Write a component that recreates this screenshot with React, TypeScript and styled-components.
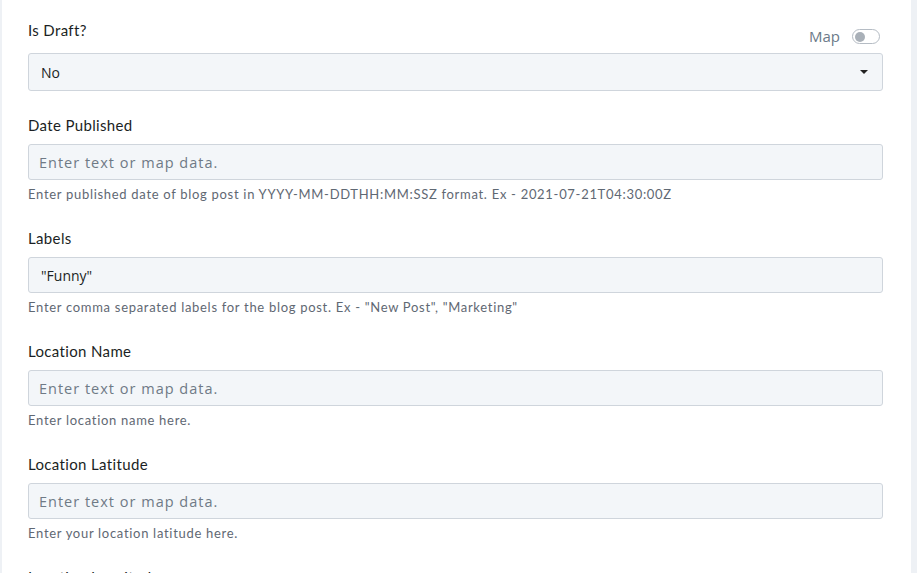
import React from "react";
import styled, { createGlobalStyle } from "styled-components";

const GlobalStyle = createGlobalStyle`
	html, body {
		margin: 0;
		padding: 0;
		background: #eef1f5;
		overflow: hidden;
	}
	* {
		box-sizing: border-box;
	}
`;

const Page = styled.div`
	display: flex;
	width: 917px;
	height: 573px;
	padding-left: 2px;
	padding-right: 6px;
	background: #eef1f5;
`;

const Panel = styled.div`
	flex: 1;
	background: #fff;
	padding: 20px 28px 0 26px;
	display: flex;
	flex-direction: column;
	gap: 24px;
	overflow: hidden;
`;

const Group = styled.div`
	display: flex;
	flex-direction: column;
`;

const HeaderRow = styled.div`
	display: flex;
	justify-content: space-between;
	align-items: flex-start;
	height: 33px;
`;

const Label = styled.label<{ $flush?: boolean }>`
	font-family: Lato, "Liberation Sans", sans-serif;
	font-size: 15px;
	line-height: 20px;
	letter-spacing: 0.35px;
	color: #1b1f24;
	margin-bottom: ${(p) => (p.$flush ? "0" : "9px")};
`;

const MapSwitch = styled.div`
	display: flex;
	align-items: center;
	gap: 12px;
	padding-top: 7px;
	padding-right: 3px;
	font-family: "Open Sans", "Liberation Sans", sans-serif;
	font-size: 15px;
	line-height: 18px;
	color: #6c7a89;
`;

const Toggle = styled.span<{ $on?: boolean }>`
	position: relative;
	width: 28px;
	height: 15px;
	border-radius: 8px;
	border: 1px solid #b5bcc4;
	background: #fff;

	&::after {
		content: "";
		position: absolute;
		top: 2px;
		left: ${(p) => (p.$on ? "15px" : "2px")};
		width: 10px;
		height: 10px;
		border-radius: 50%;
		background: #a9b0b8;
	}
`;

const Field = styled.div<{ $tall?: boolean }>`
	display: flex;
	align-items: center;
	justify-content: space-between;
	height: ${(p) => (p.$tall ? "38px" : "36px")};
	padding: 0 14px 0 10px;
	background: #f3f6f9;
	border: 1px solid #cfd5dc;
	border-radius: 3px;
	font-family: "Open Sans", "Liberation Sans", sans-serif;
	font-size: 14px;
	color: #1b1f24;
`;

const Value = styled.span<{ $placeholder?: boolean }>`
	color: ${(p) => (p.$placeholder ? "#6f7a86" : "#1b1f24")};
	font-size: ${(p) => (p.$placeholder ? "14.5px" : "14px")};
	letter-spacing: ${(p) => (p.$placeholder ? "1px" : "0")};
	padding-left: ${(p) => (p.$placeholder ? "0" : "2px")};
`;

const Caret = styled.span`
	width: 0;
	height: 0;
	border-left: 4px solid transparent;
	border-right: 4px solid transparent;
	border-top: 4px solid #222;
`;

const Help = styled.div`
	margin-top: 4px;
	font-family: Lato, "Liberation Sans", sans-serif;
	font-size: 13px;
	line-height: 20px;
	letter-spacing: 0.7px;
	color: #5f6873;
`;

type Input = { label: string; value?: string; help?: string };

const inputs: Input[] = [
	{
		label: "Date Published",
		help: "Enter published date of blog post in YYYY-MM-DDTHH:MM:SSZ format. Ex - 2021-07-21T04:30:00Z",
	},
	{
		label: "Labels",
		value: '"Funny"',
		help: 'Enter comma separated labels for the blog post. Ex - "New Post", "Marketing"',
	},
	{ label: "Location Name", help: "Enter location name here." },
	{ label: "Location Latitude", help: "Enter your location latitude here." },
	{ label: "Location Longitude", help: "Enter your location longitude here." },
];

export default function App() {
	return (
		<Page>
			<GlobalStyle />
			<Panel>
				<Group>
					<HeaderRow>
						<Label as="div" $flush>Is Draft?</Label>
						<MapSwitch>
							Map
							<Toggle />
						</MapSwitch>
					</HeaderRow>
					<Field $tall>
						<Value>No</Value>
						<Caret />
					</Field>
				</Group>
				{inputs.map((input) => (
					<Group key={input.label}>
						<Label>{input.label}</Label>
						<Field>
							{input.value ? (
								<Value>{input.value}</Value>
							) : (
								<Value $placeholder>Enter text or map data.</Value>
							)}
						</Field>
						{input.help && <Help>{input.help}</Help>}
					</Group>
				))}
			</Panel>
		</Page>
	);
}
